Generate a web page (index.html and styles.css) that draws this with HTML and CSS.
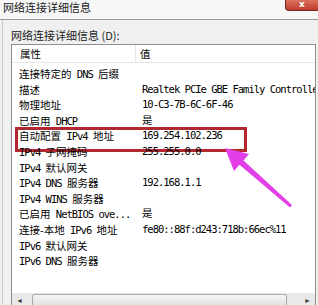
FILE: index.html
```html
<!DOCTYPE html>
<html lang="zh-CN">
<head>
    <meta charset="UTF-8">
    <meta name="viewport" content="width=device-width, initial-scale=1.0">
    <title>网络连接详细信息</title>
    <link rel="stylesheet" href="styles.css">
</head>
<body>
    <div class="window">
        <div class="titlebar">
            <span class="title">网络连接详细信息</span>
            <span class="close">x</span>
        </div>
        <div class="client">
            <div class="label">网络连接详细信息 (D):</div>
            <div class="listbox">
                <div class="head">
                    <div class="head-prop">属性</div>
                    <div class="head-val">值</div>
                </div>
                <div class="rows">
                    <div class="row"><div class="prop">连接特定的<span class="en"> DNS </span>后缀</div><div class="val"></div></div>
                    <div class="row"><div class="prop">描述</div><div class="val">Realtek PCIe GBE Family Controller</div></div>
                    <div class="row"><div class="prop">物理地址</div><div class="val">10-C3-7B-6C-6F-46</div></div>
                    <div class="row"><div class="prop">已启用<span class="en"> DHCP</span></div><div class="val">是</div></div>
                    <div class="row marked"><div class="prop">自动配置<span class="en"> IPv4 </span>地址</div><div class="val">169.254.102.236</div></div>
                    <div class="row"><div class="prop"><span class="en">IPv4 </span>子网掩码</div><div class="val">255.255.0.0</div></div>
                    <div class="row"><div class="prop"><span class="en">IPv4 </span>默认网关</div><div class="val"></div></div>
                    <div class="row"><div class="prop"><span class="en">IPv4 DNS </span>服务器</div><div class="val">192.168.1.1</div></div>
                    <div class="row"><div class="prop"><span class="en">IPv4 WINS </span>服务器</div><div class="val"></div></div>
                    <div class="row"><div class="prop">已启用<span class="en"> NetBIOS ove...</span></div><div class="val">是</div></div>
                    <div class="row"><div class="prop">连接-本地<span class="en"> IPv6 </span>地址</div><div class="val">fe80::88f:d243:718b:66ec%11</div></div>
                    <div class="row"><div class="prop"><span class="en">IPv6 </span>默认网关</div><div class="val"></div></div>
                    <div class="row"><div class="prop"><span class="en">IPv6 DNS </span>服务器</div><div class="val"></div></div>
                </div>
                <div class="hscroll">
                    <span class="scroll-btn">&#9668;</span>
                    <span class="thumb"></span>
                    <span class="scroll-btn right">&#9658;</span>
                </div>
            </div>
        </div>

        <!-- pink pointer drawn over the screenshot -->
        <svg class="arrow" viewBox="0 0 318 305" width="318" height="305">
            <polygon points="225,148 249,154 243.5,160.5 292,205 290,207.5 239.5,164.8 234,171" fill="#e23fe8"/>
        </svg>
    </div>
</body>
</html>
```

FILE: styles.css
```css
* {
    box-sizing: border-box;
}

body {
    margin: 0;
    background-color: #f0f0f0;
    font-family: "Noto Sans CJK SC", sans-serif;
    color: #000;
}

.window {
    position: relative;
    width: 318px;
    height: 305px;
    overflow: hidden;
}

.titlebar {
    display: flex;
    justify-content: space-between;
    align-items: flex-start;
    height: 20px;
    background-color: #f7f7f7;
    border-bottom: 1px solid #9c9c9c;
}

.title {
    padding-left: 3px;
    font-size: 11px;
    line-height: 15px;
    color: #1a1a1a;
}

.close {
    width: 33px;
    height: 11px;
    background: linear-gradient(#d9735f, #c13b2b);
    border-left: 1px solid #6e2a20;
    border-bottom: 1px solid #6e2a20;
    border-bottom-left-radius: 4px;
    color: #fff;
    font: bold 9px/9px "DejaVu Sans", sans-serif;
    text-align: center;
}

.client {
    margin-left: 2px;
    height: 285px;
    border-left: 1px solid #c9c9c9;
    padding: 8px 2px 0 8px;
}

.label {
    font-size: 11px;
    line-height: 14px;
    margin-bottom: 2px;
    color: #1a1a1a;
}

.listbox {
    height: 270px;
    background-color: #fff;
    border: 1px solid #8e8f8f;
    overflow: hidden;
    white-space: nowrap;
}

.head {
    display: flex;
    height: 18px;
    border-bottom: 1px solid #e5e5e5;
    font-size: 10.5px;
    line-height: 17px;
}

.head-prop {
    flex: none;
    width: 124px;
    padding-left: 8px;
    border-right: 1px solid #e5e5e5;
}

.head-val {
    padding-left: 4px;
}

.rows {
    height: 230px;
    padding-top: 3px;
}

.row {
    position: relative;
    display: flex;
    height: 15.6px;
    font-size: 10.5px;
    line-height: 15.6px;
}

.prop {
    flex: none;
    width: 124px;
    padding-left: 7px;
}

.val {
    flex: none;
    padding-left: 6px;
    font-family: "DejaVu Sans Mono", "Noto Sans CJK SC", monospace;
    letter-spacing: -1px;
}

.en {
    font-family: "DejaVu Sans Mono", monospace;
    letter-spacing: -1px;
}

/* red frame drawn round the IPv4 row */
.row.marked::after {
    content: "";
    position: absolute;
    left: 3px;
    top: -1px;
    width: 226px;
    height: 18.5px;
    border: 3px solid #b3282e;
}

.hscroll {
    display: flex;
    align-items: center;
    height: 15px;
    background-color: #e9e9e9;
}

.scroll-btn {
    width: 15px;
    font-size: 7px;
    line-height: 15px;
    text-align: center;
    color: #404040;
}

.scroll-btn.right {
    margin-left: auto;
}

.thumb {
    width: 255px;
    height: 14px;
    margin-left: 5px;
    border: 1px solid #a9a9a9;
    border-radius: 2px;
    background: linear-gradient(#f6f6f6, #dedede);
}

.arrow {
    position: absolute;
    top: 0;
    left: 0;
    pointer-events: none;
}
```
